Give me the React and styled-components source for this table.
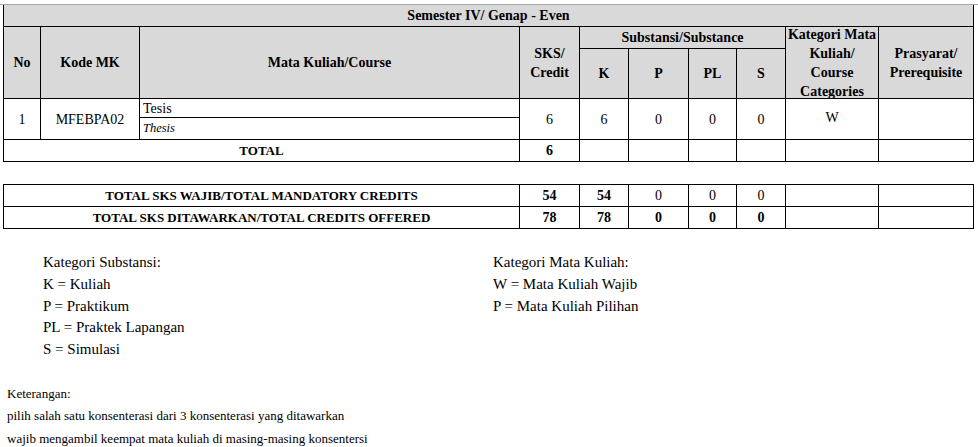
import styled, { createGlobalStyle } from "styled-components";

const GlobalStyle = createGlobalStyle`
  body {
    margin: 0;
    background: #ffffff;
    font-family: "Liberation Serif", "Times New Roman", serif;
    color: #000000;
  }
`;

const colWidths = [37, 99, 380, 60, 49, 60, 48, 49, 93, 95];

const courses = [
  { no: 1, kode: "MFEBPA02", nama: "Tesis", name: "Thesis", sks: 6, k: 6, p: 0, pl: 0, s: 0, kat: "W", pras: "" },
];

const totals = [
  { label: "TOTAL SKS WAJIB/TOTAL MANDATORY CREDITS", sks: 54, k: 54, p: 0, pl: 0, s: 0, boldZero: false },
  { label: "TOTAL SKS DITAWARKAN/TOTAL CREDITS OFFERED", sks: 78, k: 78, p: 0, pl: 0, s: 0, boldZero: true },
];

export default function App() {
  return (
    <Page>
      <GlobalStyle />
      <TopRule />
      <Grid>
        <Cols />
        <tbody>
          <tr>
            <HeadCell colSpan={10} $h={21} $top>
              Semester IV/ Genap - Even
            </HeadCell>
          </tr>
          <tr>
            <HeadCell rowSpan={2}>No</HeadCell>
            <HeadCell rowSpan={2}>Kode MK</HeadCell>
            <HeadCell rowSpan={2}>Mata Kuliah/Course</HeadCell>
            <HeadCell rowSpan={2}>
              <Stack>
                SKS/
                <br />
                Credit
              </Stack>
            </HeadCell>
            <HeadCell colSpan={4} $h={21}>
              Substansi/Substance
            </HeadCell>
            <HeadCell rowSpan={2}>
              <Stack $tight>
                Kategori Mata
                <br />
                Kuliah/
                <br />
                Course
                <br />
                Categories
              </Stack>
            </HeadCell>
            <HeadCell rowSpan={2}>
              <Stack>
                Prasyarat/
                <br />
                Prerequisite
              </Stack>
            </HeadCell>
          </tr>
          <tr>
            <HeadCell $h={49}>K</HeadCell>
            <HeadCell>P</HeadCell>
            <HeadCell>PL</HeadCell>
            <HeadCell>S</HeadCell>
          </tr>
          {courses.map((c) => [
            <tr key={c.kode + "a"}>
              <Cell rowSpan={2}>{c.no}</Cell>
              <Cell rowSpan={2}>{c.kode}</Cell>
              <Cell $left $h={18}>{c.nama}</Cell>
              <Cell rowSpan={2}>{c.sks}</Cell>
              <Cell rowSpan={2}>{c.k}</Cell>
              <Cell rowSpan={2}>{c.p}</Cell>
              <Cell rowSpan={2}>{c.pl}</Cell>
              <Cell rowSpan={2}>{c.s}</Cell>
              <Cell rowSpan={2} $raise>{c.kat}</Cell>
              <Cell rowSpan={2}>{c.pras}</Cell>
            </tr>,
            <tr key={c.kode + "b"}>
              <Cell $left $italic $h={21}>{c.name}</Cell>
            </tr>,
          ])}
          <tr>
            <Cell colSpan={3} $bold $caps $h={21}>TOTAL</Cell>
            <Cell $bold>6</Cell>
            <Cell />
            <Cell />
            <Cell />
            <Cell />
            <Cell />
            <Cell />
          </tr>
        </tbody>
      </Grid>

      <Grid $gap>
        <Cols />
        <tbody>
          {totals.map((t) => (
            <tr key={t.label}>
              <Cell colSpan={3} $bold $caps $h={21}>{t.label}</Cell>
              <Cell $bold>{t.sks}</Cell>
              <Cell $bold>{t.k}</Cell>
              <Cell $bold={t.boldZero}>{t.p}</Cell>
              <Cell $bold={t.boldZero}>{t.pl}</Cell>
              <Cell $bold={t.boldZero}>{t.s}</Cell>
              <Cell />
              <Cell />
            </tr>
          ))}
        </tbody>
      </Grid>

      <Legend>
        <LegendColumn>
          <LegendLine>Kategori Substansi:</LegendLine>
          <LegendLine>K = Kuliah</LegendLine>
          <LegendLine>P = Praktikum</LegendLine>
          <LegendLine>PL = Praktek Lapangan</LegendLine>
          <LegendLine>S = Simulasi</LegendLine>
        </LegendColumn>
        <LegendColumn>
          <LegendLine>Kategori Mata Kuliah:</LegendLine>
          <LegendLine>W = Mata Kuliah Wajib</LegendLine>
          <LegendLine>P = Mata Kuliah Pilihan</LegendLine>
        </LegendColumn>
      </Legend>

      <Notes>
        <NoteLine>Keterangan:</NoteLine>
        <NoteLine>pilih salah satu konsenterasi dari 3 konsenterasi yang ditawarkan</NoteLine>
        <NoteLine>wajib mengambil keempat mata kuliah di masing-masing konsentersi</NoteLine>
      </Notes>
    </Page>
  );
}

function Cols() {
  return (
    <colgroup>
      {colWidths.map((w, i) => (
        <col key={i} style={{ width: w }} />
      ))}
    </colgroup>
  );
}

const Page = styled.div`
  padding-top: 4px;
  width: 978px;
`;

const TopRule = styled.div`
  height: 1px;
  background: #a6a6a6;
`;

const Grid = styled.table`
  border-collapse: collapse;
  table-layout: fixed;
  width: 971px;
  margin-left: 3px;
  margin-top: ${(p) => (p.$gap ? "22px" : "0")};
`;

const HeadCell = styled.td`
  background: #d9d9d9;
  border: 1px solid #000000;
  border-top: ${(p) => (p.$top ? "none" : "1px solid #000000")};
  font-weight: bold;
  font-size: 14px;
  text-align: center;
  vertical-align: middle;
  padding: 0;
  line-height: 19px;
  height: ${(p) => (p.$h ? `${p.$h}px` : "auto")};
  white-space: nowrap;
`;

const Stack = styled.div`
  line-height: 19px;
  margin: ${(p) => (p.$tight ? "-3px 0" : "0")};
`;

const Cell = styled.td`
  border: 1px solid #000000;
  font-size: ${(p) => (p.$italic ? "12.5px" : p.$caps ? "13px" : "14px")};
  font-weight: ${(p) => (p.$bold ? "bold" : "normal")};
  font-style: ${(p) => (p.$italic ? "italic" : "normal")};
  text-align: ${(p) => (p.$left ? "left" : "center")};
  vertical-align: middle;
  padding: ${(p) => (p.$left ? "0 0 0 3px" : p.$raise ? "0 0 4px 0" : "0")};
  line-height: 17px;
  height: ${(p) => (p.$h ? `${p.$h}px` : "auto")};
  white-space: nowrap;
`;

const Legend = styled.div`
  display: grid;
  grid-template-columns: 450px 1fr;
  padding-left: 43px;
  margin-top: 23px;
`;

const LegendColumn = styled.div`
  display: flex;
  flex-direction: column;
`;

const LegendLine = styled.div`
  font-size: 15px;
  line-height: 21.8px;
`;

const Notes = styled.div`
  margin-top: 22px;
  padding-left: 7px;
  display: flex;
  flex-direction: column;
`;

const NoteLine = styled.div`
  font-size: 13px;
  line-height: 22.5px;
`;
